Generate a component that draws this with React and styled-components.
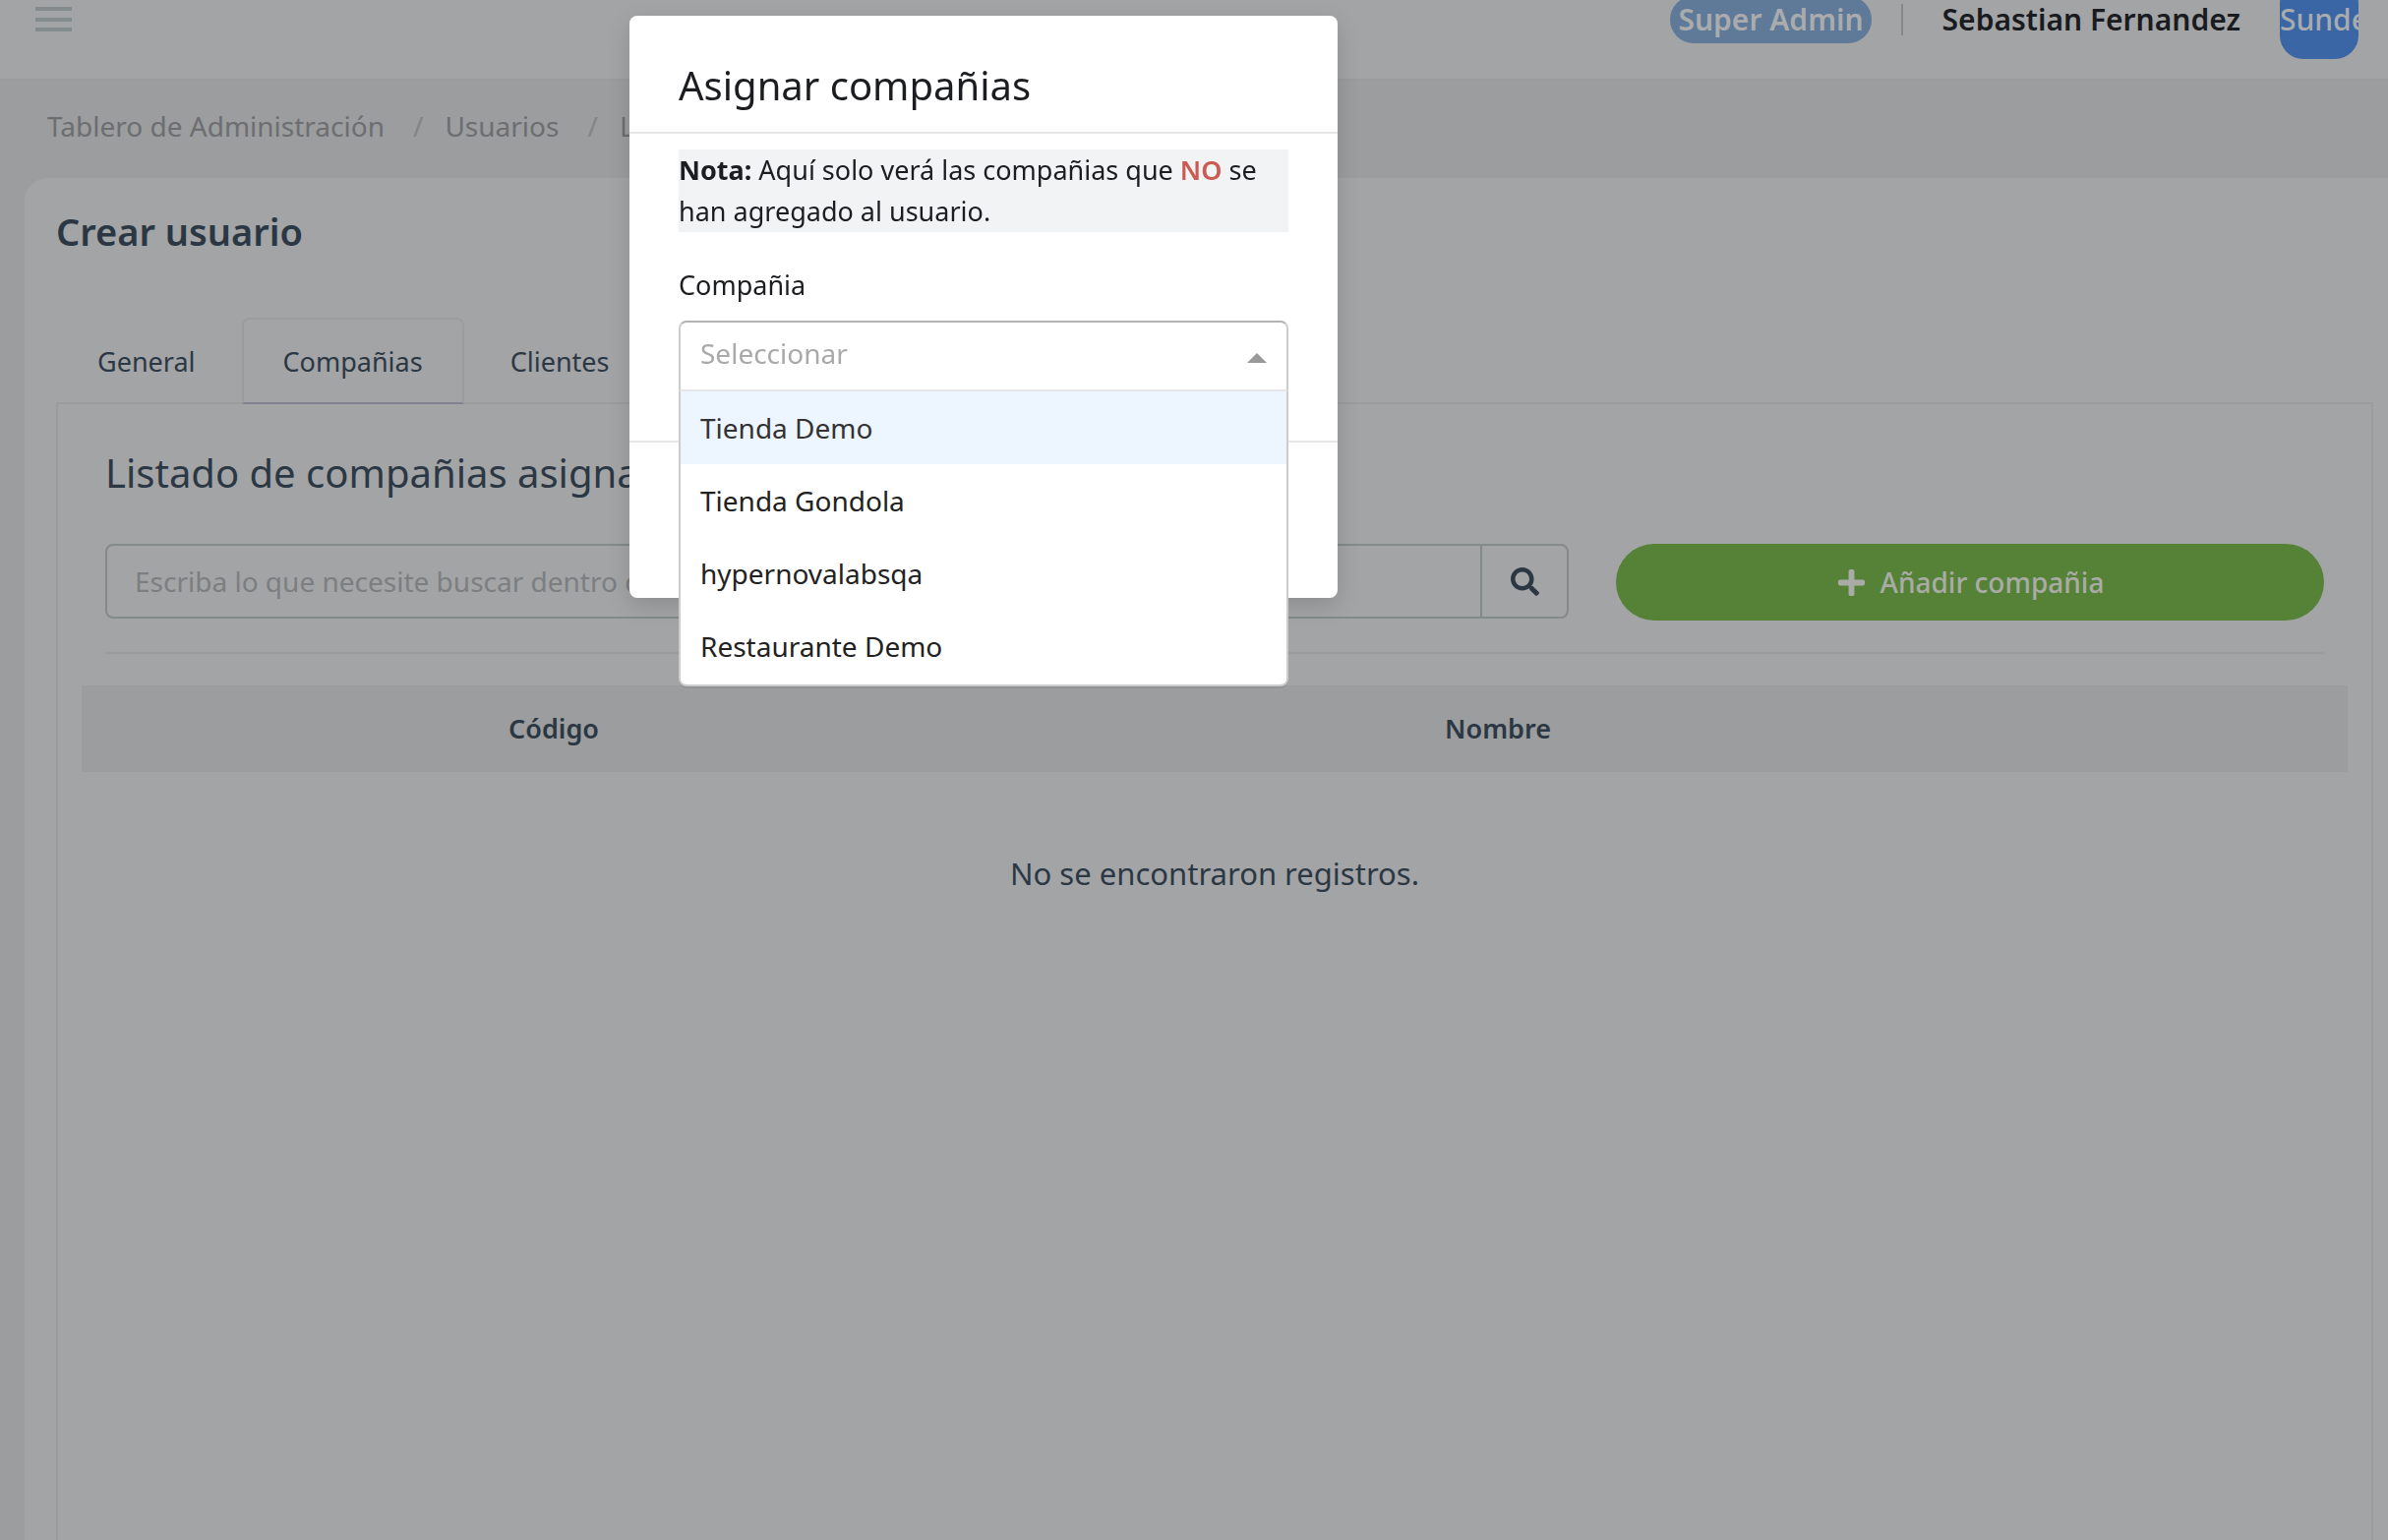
import React from "react";
import styled, { createGlobalStyle } from "styled-components";
import { FaPlus, FaSearch } from "react-icons/fa";

//#region Styles
const GlobalStyle = createGlobalStyle`
  *,
  *::before,
  *::after {
    box-sizing: border-box;
  }
  body {
    margin: 0;
    overflow: hidden;
    background-color: #9c9d9e;
    color: #2b3844;
    font-family: "Noto Sans", sans-serif;
    font-size: 27px;
    line-height: 42px;
  }
  button,
  input,
  select {
    font: inherit;
    color: inherit;
  }
`;

const PageStyle = styled.div`
  display: flex;
  flex-direction: column;
  height: 100vh;
  overflow: hidden;
`;

const NavbarStyle = styled.header`
  display: flex;
  flex: none;
  align-items: center;
  height: 122px;
  margin-top: -40px;
  padding: 0 30px 0 36px;
  background-color: #a3a4a6;
  border-bottom: 2px solid #9a9b9d;
`;
const MenuButtonStyle = styled.button`
  display: flex;
  margin-right: auto;
  padding: 0;
  background: none;
  border: 0;
`;
const RoleBadgeStyle = styled.span`
  height: 48px;
  padding: 0 8px;
  border-radius: 24px;
  background-color: #5f7998;
  color: #a9abad;
  font-size: 30px;
  font-weight: 600;
  line-height: 48px;
`;
const NavDividerStyle = styled.span`
  width: 2px;
  height: 32px;
  margin: 0 40px 0 30px;
  background-color: #86888a;
`;
const UserNameStyle = styled.span`
  color: #191b1f;
  font-size: 30px;
  font-weight: 600;
`;
const AvatarStyle = styled.span`
  width: 80px;
  height: 80px;
  margin-left: 40px;
  border-radius: 24px;
  overflow: hidden;
  background-color: #3a66a5;
  color: #a9abad;
  font-size: 30px;
  font-weight: 500;
  line-height: 80px;
  white-space: nowrap;
`;

const BreadcrumbStyle = styled.nav`
  display: flex;
  flex: none;
  height: 99px;
  padding: 26px 48px;
  color: #6c6e71;
  font-size: 28px;
  line-height: 40px;
`;
const CrumbStyle = styled.a`
  color: inherit;
  text-decoration: none;

  & + &::before {
    content: "/";
    padding: 0 22px 0 29px;
    color: #838587;
  }
`;

const CardStyle = styled.main`
  display: flex;
  flex: 1;
  flex-direction: column;
  min-height: 0;
  margin-left: 25px;
  padding: 28px 15px 0 32px;
  border-radius: 24px 0 0 0;
  background-color: #a3a4a6;
`;
const PageTitleStyle = styled.h1`
  margin: 0 0 62px;
  font-size: 38px;
  font-weight: 600;
  line-height: 52px;
`;
const TabListStyle = styled.div`
  position: relative;
  display: flex;
  gap: 5px;
  margin-bottom: -2px;
`;
const TabStyle = styled.button`
  height: 88px;
  padding: 2px 40px 0;
  background: none;
  border: 2px solid transparent;
  border-radius: 8px 8px 0 0;
  ${({ $active }) =>
    $active &&
    `
    background-color: #a3a4a6;
    border-color: #9b9c9e #9b9c9e #80818f;
  `}
`;
const PanelStyle = styled.section`
  flex: 1;
  padding: 44px 24px 0;
  border: 2px solid #9b9c9e;
  border-bottom: 0;
`;
const ToolbarStyle = styled.div`
  padding: 0 24px;
`;
const PanelTitleStyle = styled.h2`
  margin: 0 0 46px;
  font-size: 40px;
  font-weight: 400;
  line-height: 52px;
`;
const ActionsStyle = styled.div`
  display: grid;
  grid-template-columns: minmax(0, 62fr) minmax(0, 30fr);
  align-items: start;
  gap: 48px;
  padding-bottom: 32px;
  border-bottom: 2px solid #9a9b9d;
`;
const SearchStyle = styled.form`
  display: flex;
  height: 76px;
  border: 2px solid #828b8a;
  border-radius: 8px;
`;
const SearchInputStyle = styled.input`
  flex: 1;
  min-width: 0;
  padding: 0 28px;
  background: none;
  border: 0;
  outline: 0;
  font-size: 28px;

  &::placeholder {
    color: #7c7e80;
    opacity: 1;
  }
`;
const SearchButtonStyle = styled.button`
  display: flex;
  align-items: center;
  justify-content: center;
  width: 88px;
  background: none;
  border: 0;
  border-left: 2px solid #828b8a;
`;
const AddButtonStyle = styled.button`
  display: flex;
  align-items: center;
  justify-content: center;
  gap: 14px;
  height: 78px;
  border: 0;
  border-radius: 39px;
  background-color: #568238;
  color: #a9aca6;
  font-size: 28px;
  font-weight: 500;
`;
const TableStyle = styled.table`
  width: 100%;
  margin-top: 32px;
  border-collapse: collapse;
  table-layout: fixed;
  text-align: center;
`;
const HeadCellStyle = styled.th`
  width: ${({ $width }) => $width};
  height: 88px;
  padding: 0;
  background-color: #9c9d9e;
  font-weight: 600;
`;
const EmptyCellStyle = styled.td`
  padding: 82px 0;
  font-size: 31px;
`;

const OverlayStyle = styled.div`
  position: fixed;
  inset: 0;
  padding-top: 16px;
`;
const DialogStyle = styled.div`
  width: 720px;
  margin-left: 640px;
  border-radius: 8px;
  background-color: #fff;
  box-shadow: 0 8px 24px rgba(0, 0, 0, 0.14);
  color: #1b1d20;
`;
const DialogHeaderStyle = styled.header`
  height: 120px;
  padding: 44px 50px 0;
  border-bottom: 2px solid #e6e7e8;
`;
const DialogTitleStyle = styled.h2`
  margin: 0;
  font-size: 40px;
  font-weight: 400;
  line-height: 54px;
`;
const DialogBodyStyle = styled.div`
  height: 312px;
  padding: 16px 50px 0;
`;
const DialogFooterStyle = styled.footer`
  height: 160px;
  border-top: 2px solid #e6e7e8;
`;
const NoteStyle = styled.p`
  margin: 0 0 33px;
  background-color: #f1f3f5;
`;
const NegativeStyle = styled.b`
  color: #cb5a52;
  font-weight: 600;
`;
const LabelStyle = styled.label`
  display: block;
  margin-bottom: 15px;
`;
const SelectWrapStyle = styled.div`
  position: relative;
  font-size: 28px;
`;
const SelectStyle = styled.select`
  display: block;
  width: 100%;
  height: 72px;
  padding: 0 20px 6px;
  appearance: none;
  background: #fff;
  border: 2px solid #ccc;
  border-color: #b3b3b3 #ccc #e6e6e6;
  border-radius: 8px 8px 0 0;
  outline: 0;
  color: #a9a9a9;
`;
const ArrowStyle = styled.span`
  position: absolute;
  top: 33px;
  right: 22px;
  border: 10px solid transparent;
  border-top-width: 0;
  border-bottom-color: #999;
  pointer-events: none;
`;
const MenuStyle = styled.ul`
  position: absolute;
  top: 100%;
  left: 0;
  right: 0;
  margin: 0;
  padding: 0 0 2px;
  list-style: none;
  background-color: #fff;
  border: 2px solid #ccc;
  border-top: 0;
  border-radius: 0 0 8px 8px;
  box-shadow: 0 2px 0 rgba(0, 0, 0, 0.06);
  overflow: hidden;
`;
const OptionStyle = styled.li`
  padding: 16px 20px;
  background-color: ${({ $marked }) => ($marked ? "#edf5ff" : "#fff")};
  color: ${({ $marked }) => ($marked ? "#333" : "#222")};
`;
//#endregion Styles

const crumbs = ["Tablero de Administración", "Usuarios", "Listado"];
const tabs = ["General", "Compañias", "Clientes"];
const companies = [
  "Tienda Demo",
  "Tienda Gondola",
  "hypernovalabsqa",
  "Restaurante Demo",
];

function Navbar() {
  return (
    <NavbarStyle>
      <MenuButtonStyle type="button" aria-label="Menú">
        <svg width="37" height="26" viewBox="0 0 37 26" fill="#838b8c">
          <rect width="37" height="4" />
          <rect y="11" width="37" height="4" />
          <rect y="21" width="37" height="4" />
        </svg>
      </MenuButtonStyle>
      <RoleBadgeStyle>Super Admin</RoleBadgeStyle>
      <NavDividerStyle />
      <UserNameStyle>Sebastian Fernandez</UserNameStyle>
      <AvatarStyle>Sunde</AvatarStyle>
    </NavbarStyle>
  );
}

function CompaniesPanel() {
  return (
    <PanelStyle>
      <ToolbarStyle>
        <PanelTitleStyle>Listado de compañias asignadas</PanelTitleStyle>
        <ActionsStyle>
          <SearchStyle>
            <SearchInputStyle
              aria-label="Buscar"
              placeholder="Escriba lo que necesite buscar dentro de la tabla"
            />
            <SearchButtonStyle type="button" aria-label="Buscar">
              <FaSearch size={29} />
            </SearchButtonStyle>
          </SearchStyle>
          <AddButtonStyle type="button">
            <FaPlus size={31} />
            Añadir compañia
          </AddButtonStyle>
        </ActionsStyle>
      </ToolbarStyle>
      <TableStyle>
        <thead>
          <tr>
            <HeadCellStyle $width="41.667%">Código</HeadCellStyle>
            <HeadCellStyle $width="41.667%">Nombre</HeadCellStyle>
            <HeadCellStyle />
          </tr>
        </thead>
        <tbody>
          <tr>
            <EmptyCellStyle colSpan={3}>
              No se encontraron registros.
            </EmptyCellStyle>
          </tr>
        </tbody>
      </TableStyle>
    </PanelStyle>
  );
}

function AssignDialog() {
  return (
    <OverlayStyle>
      <DialogStyle role="dialog" aria-labelledby="dialog-title">
        <DialogHeaderStyle>
          <DialogTitleStyle id="dialog-title">Asignar compañias</DialogTitleStyle>
        </DialogHeaderStyle>
        <DialogBodyStyle>
          <NoteStyle>
            <b>Nota:</b> Aquí solo verá las compañias que{" "}
            <NegativeStyle>NO</NegativeStyle> se han agregado al usuario.
          </NoteStyle>
          <LabelStyle htmlFor="company">Compañia</LabelStyle>
          <SelectWrapStyle>
            <SelectStyle id="company" defaultValue="">
              <option value="">Seleccionar</option>
              {companies.map((name) => (
                <option key={name}>{name}</option>
              ))}
            </SelectStyle>
            <ArrowStyle />
            <MenuStyle role="listbox" aria-label="Compañia">
              {companies.map((name, index) => (
                <OptionStyle key={name} role="option" $marked={index === 0}>
                  {name}
                </OptionStyle>
              ))}
            </MenuStyle>
          </SelectWrapStyle>
        </DialogBodyStyle>
        <DialogFooterStyle />
      </DialogStyle>
    </OverlayStyle>
  );
}

export default function App() {
  return (
    <>
      <GlobalStyle />
      <PageStyle>
        <Navbar />
        <BreadcrumbStyle>
          {crumbs.map((crumb) => (
            <CrumbStyle key={crumb} href="#">
              {crumb}
            </CrumbStyle>
          ))}
        </BreadcrumbStyle>
        <CardStyle>
          <PageTitleStyle>Crear usuario</PageTitleStyle>
          <TabListStyle role="tablist">
            {tabs.map((tab) => (
              <TabStyle
                key={tab}
                type="button"
                role="tab"
                $active={tab === "Compañias"}
              >
                {tab}
              </TabStyle>
            ))}
          </TabListStyle>
          <CompaniesPanel />
        </CardStyle>
      </PageStyle>
      <AssignDialog />
    </>
  );
}
